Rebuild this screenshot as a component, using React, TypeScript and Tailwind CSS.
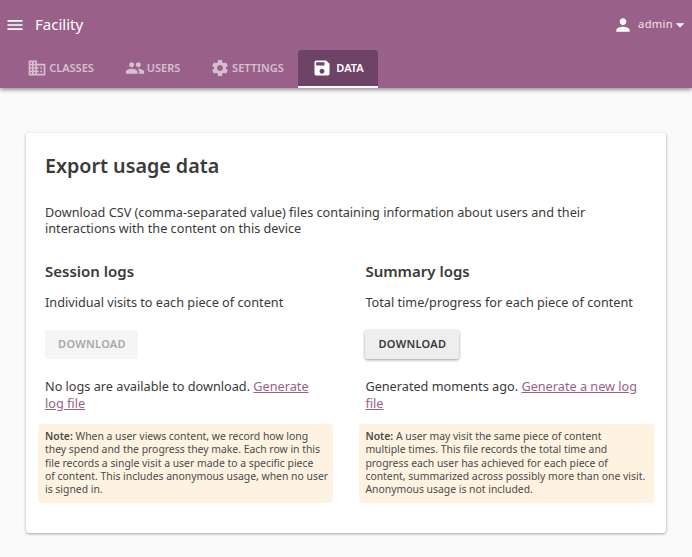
import { ReactNode } from "react";
import { MdArrowDropDown, MdBusiness, MdMenu, MdPeople, MdPerson, MdSave, MdSettings } from "react-icons/md";

const tabs = [
  { label: "CLASSES", icon: <MdBusiness size={20} />, width: "w-[97px]" },
  { label: "USERS", icon: <MdPeople size={20} />, width: "w-[87px]" },
  { label: "SETTINGS", icon: <MdSettings size={20} />, width: "w-[102px]" },
];

function LogColumn({
  title,
  description,
  disabled,
  status,
  link,
  note,
}: {
  title: string;
  description: string;
  disabled?: boolean;
  status: string;
  link: string;
  note: ReactNode;
}) {
  return (
    <div>
      <div className="px-[6.6px]">
        <h2 className="text-[15px] leading-[20px] font-semibold">{title}</h2>
        <p className="mt-[13px] text-[12.7px] leading-[16px]">{description}</p>
        {disabled ? (
          <button className="mt-[20px] block h-[29px] w-[93px] rounded-[2px] bg-[#f5f5f5] pl-[1px] text-[11px] font-semibold tracking-[0.3px] text-[#a8a8a8]">
            DOWNLOAD
          </button>
        ) : (
          <button className="mt-[20px] block h-[29px] w-[94px] rounded-[2px] bg-[#eeeeee] text-[11px] font-semibold tracking-[0.3px] text-[#3a3a3a] shadow-[0_1px_3px_rgba(0,0,0,0.4)]">
            DOWNLOAD
          </button>
        )}
        <p className="mt-[19px] text-[12.7px] leading-[17px]">
          {status} <a className="text-[#996189] underline">{link}</a>
        </p>
      </div>
      <div className="mt-[12px] h-[79px] rounded-[3px] bg-[#fef2e1] px-[6.6px] pt-[6px] text-[10.4px] leading-[13.3px] whitespace-nowrap text-[#4a4a4a]">
        {note}
      </div>
    </div>
  );
}

export default function App() {
  return (
    <div className="h-[557px] overflow-hidden bg-[#fafafa] font-['Noto_Sans',sans-serif] text-[#3a3a3a]">
      <header className="h-[88px] bg-[#996189] text-white shadow-[0_2px_4px_rgba(0,0,0,0.4)]">
        <div className="flex h-[50px] items-center pr-[2px] pb-[1px] pl-[5px]">
          <MdMenu size={20} />
          <span className="ml-[10px] text-[15px]">Facility</span>
          <div className="ml-auto flex items-center">
            <MdPerson size={20} />
            <span className="ml-[5px] text-[11.2px] tracking-[0.3px] text-[#f0e4ec]">admin</span>
            <MdArrowDropDown size={20} className="ml-[-3px]" />
          </div>
        </div>
        <nav className="flex h-[38px] pl-[12px]">
          {tabs.map((tab) => (
            <div
              key={tab.label}
              className={`flex items-center justify-center gap-[2px] pb-[2px] text-[#d6bfd0] ${tab.width}`}
            >
              {tab.icon}
              <span className="text-[11px] font-semibold">{tab.label}</span>
            </div>
          ))}
          <div className="flex w-[80px] items-center justify-center gap-[4px] rounded-t-[4px] border-b-2 border-white bg-[#6e4368]">
            <MdSave size={20} />
            <span className="text-[11px] font-semibold">DATA</span>
          </div>
        </nav>
      </header>

      <main className="px-[26px] pt-[45px]">
        <section className="h-[400px] rounded-[3px] bg-white px-[12.4px] pt-[19px] shadow-[0_1px_3px_rgba(0,0,0,0.35)]">
          <div className="px-[6.6px]">
            <h1 className="text-[19.7px] leading-[28px] font-semibold">Export usage data</h1>
            <p className="mt-[24px] text-[12.7px] leading-[16px]">
              Download CSV (comma-separated value) files containing information about users and their interactions
              with the content on this device
            </p>
          </div>
          <div className="mt-[25px] grid grid-cols-2 gap-[25.6px]">
            <LogColumn
              title="Session logs"
              description="Individual visits to each piece of content"
              disabled
              status="No logs are available to download."
              link="Generate log file"
              note={
                <>
                  <b className="font-semibold">Note:</b> When a user views content, we record how long
                  <br />
                  they spend and the progress they make. Each row in this
                  <br />
                  file records a single visit a user made to a specific piece
                  <br />
                  of content. This includes anonymous usage, when no user
                  <br />
                  is signed in.
                </>
              }
            />
            <LogColumn
              title="Summary logs"
              description="Total time/progress for each piece of content"
              status="Generated moments ago."
              link="Generate a new log file"
              note={
                <>
                  <b className="font-semibold">Note:</b> A user may visit the same piece of content
                  <br />
                  multiple times. This file records the total time and
                  <br />
                  progress each user has achieved for each piece of
                  <br />
                  content, summarized across possibly more than one visit.
                  <br />
                  Anonymous usage is not included.
                </>
              }
            />
          </div>
        </section>
      </main>
    </div>
  );
}
